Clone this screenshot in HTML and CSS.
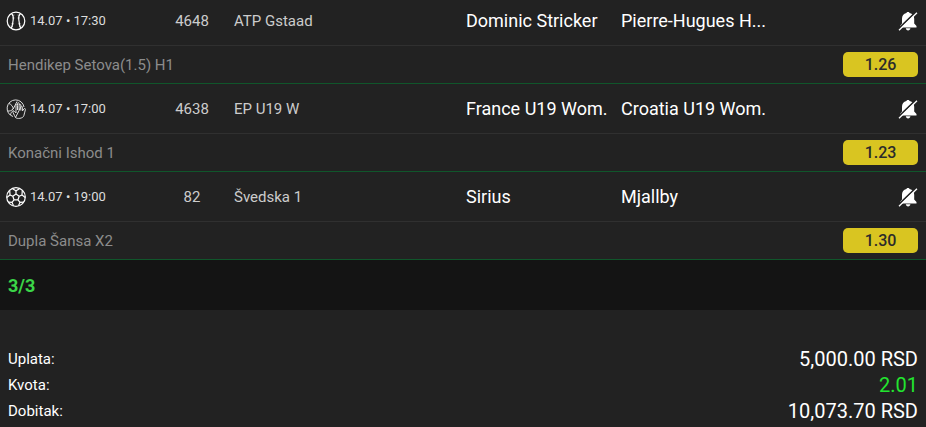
FILE: index.html
```html
<!DOCTYPE html>
<html lang="sr">
  <head>
    <meta charset="UTF-8" />
    <meta name="viewport" content="width=device-width, initial-scale=1.0" />
    <title>Tiket</title>
    <link rel="stylesheet" href="styles.css">
  </head>
  <body>
    <!-- Shared icons -->
    <svg class="sprite" aria-hidden="true">
      <symbol id="bell-off" viewBox="0 0 20 20">
        <path fill="#fff" d="M10 1c.9 0 1.500.5 1.600 1.100 3 .7 4.600 2.900 4.600 5.700v4.700l2.300 2.500v1.500H2V15l2-2.500V7.800c0-2.800 1.500-5 4.400-5.700C8.500 1.500 9.100 1 10 1zM7.800 17.300h4.600c-.2 1.300-1.100 2.100-2.300 2.100s-2.100-.8-2.300-2.100z" />
        <path stroke="#222" stroke-width="1.700" d="M0 18.300L18 .8" />
        <path stroke="#fff" stroke-width="1.300" d="M1 19.300L19 1.800" />
      </symbol>
    </svg>

    <!-- Matches -->
    <div class="match">
      <div class="match-head">
        <div class="time">
          <svg class="sport" viewBox="0 0 20 20" fill="none" stroke="#fff" stroke-width="1.200">
            <circle cx="10" cy="10" r="8.800" />
            <path d="M5.500 2.500C8.200 5.500 7.500 7.500 7 10s-.2 4.500-1.700 7.300M14.500 2.500C11.800 5.500 12.500 7.500 13 10s.2 4.500 1.700 7.300" />
            <path stroke-width=".5" d="M6 4.500l2.500-.5M6 7h2.500M5.500 12.500l2.500.5M4.500 15l2.500.7M14 4.500l-2.500-.5M14 7h-2.500M14.500 12.500l-2.500.5M15.500 15l-2.500.7" />
          </svg>
          <span>14.07 • 17:30</span>
        </div>
        <span class="code">4648</span>
        <span class="league">ATP Gstaad</span>
        <span class="team">Dominic Stricker</span>
        <span class="team">Pierre-Hugues H...</span>
        <button class="notify" aria-label="Obaveštenja"><svg><use href="#bell-off" /></svg></button>
      </div>
      <div class="match-bet">
        <span>Hendikep Setova(1.5) H1</span>
        <button class="odd">1.26</button>
      </div>
    </div>

    <div class="match">
      <div class="match-head">
        <div class="time">
          <svg class="sport" viewBox="0 0 20 20" fill="none" stroke="#ddd" stroke-width="1">
            <path d="M7 17.500A8.500 8.500 0 1 1 18 8" />
            <path d="M3 4.500c2.500 1 4 3 4.200 5.500M1.500 12c2.500.3 4-.5 5.700-2M7.200 10L11 2.500M4.500 16c.2-2 1.200-3.500 3-4.500" />
            <path d="M9.500 18.500C8.500 16 6.500 13.500 7 12.500s2 .2 3 1.500V6.500c0-1.200 1.400-1.200 1.500 0V11M11.500 6V4.500c0-1.200 1.500-1.200 1.600 0V11M13.200 6c.1-1.200 1.600-1.100 1.600 0v5.500M14.900 8c.2-1 1.500-.9 1.500.2V12l1.600-2.200c.6-.8 1.700-.2 1.400.8-.8 2.400-.9 4.400-1.600 6.200-.8 2.800-6.800 3.400-8.300 1.700z" />
          </svg>
          <span>14.07 • 17:00</span>
        </div>
        <span class="code">4638</span>
        <span class="league">EP U19 W</span>
        <span class="team">France U19 Wom.</span>
        <span class="team">Croatia U19 Wom.</span>
        <button class="notify" aria-label="Obaveštenja"><svg><use href="#bell-off" /></svg></button>
      </div>
      <div class="match-bet">
        <span>Konačni Ishod 1</span>
        <button class="odd">1.23</button>
      </div>
    </div>

    <div class="match">
      <div class="match-head">
        <div class="time">
          <svg class="sport" viewBox="0 0 20 20" fill="none" stroke="#fff" stroke-width="1.200">
            <circle cx="10" cy="10" r="9.300" />
            <path d="M10 7l3.200 2.200-1.200 3.600H8L6.800 9.200zM10 7V3.800M13.200 9.200L16 8M12 12.800l2 2.500M8 12.800l-2 2.500M6.800 9.200L4 8" />
            <path d="M6.500 1.700L10 3.800l3.500-2.100M16.300 3.300L16 8l3.200 2.500M17.500 15.200l-3.500.1-1.500 3.500M2.500 15.200l3.500.1 1.500 3.500M3.700 3.300L4 8 .8 10.500" />
          </svg>
          <span>14.07 • 19:00</span>
        </div>
        <span class="code">82</span>
        <span class="league">Švedska 1</span>
        <span class="team">Sirius</span>
        <span class="team">Mjallby</span>
        <button class="notify" aria-label="Obaveštenja"><svg><use href="#bell-off" /></svg></button>
      </div>
      <div class="match-bet">
        <span>Dupla Šansa X2</span>
        <button class="odd">1.30</button>
      </div>
    </div>

    <div class="count">3/3</div>

    <!-- Ticket totals -->
    <dl class="totals">
      <div class="total"><dt>Uplata:</dt><dd>5,000.00 RSD</dd></div>
      <div class="total"><dt>Kvota:</dt><dd class="quota">2.01</dd></div>
      <div class="total"><dt>Dobitak:</dt><dd>10,073.70 RSD</dd></div>
    </dl>
  </body>
</html>
```
FILE: styles.css
```css
body {
  margin: 0;
  background: #222;
  color: #fff;
  font-family: Roboto, sans-serif;
  font-size: 15px;
}
button {
  border: 0;
  padding: 0;
  background: none;
  font-family: inherit;
  cursor: pointer;
}
.sprite {
  display: none;
}
.match {
  border-bottom: 1px solid #10562b;
}
.match-head {
  display: grid;
  grid-template-columns: 144fr 84fr 232fr 155fr 155fr 142fr;
  align-items: center;
  padding: 14px 8px 13px 6px;
  line-height: 22px;
  border-bottom: 1px solid #303030;
  white-space: nowrap;
}
.sprite + .match .match-head {
  padding-top: 10px;
}
.time {
  display: flex;
  align-items: center;
  gap: 4px;
  color: #ddd;
  font-size: 13px;
}
.sport {
  width: 20px;
  height: 20px;
}
.code {
  text-align: center;
  color: #ccc;
}
.league {
  color: #ccc;
}
.team {
  font-size: 18px;
}
.notify {
  justify-self: end;
}
.notify svg {
  display: block;
  width: 20px;
  height: 20px;
}
.match-bet {
  display: flex;
  align-items: center;
  justify-content: space-between;
  padding: 6px 8px;
  color: #8c8c8c;
}
.odd {
  width: 75px;
  height: 25px;
  border-radius: 5px;
  background: #d9c521;
  color: #2b2b2b;
  font-size: 16px;
  font-weight: 500;
}
.count {
  padding: 15px 8px 13px;
  background: #141414;
  color: #3bd548;
  font-size: 18px;
  font-weight: bold;
  line-height: 22px;
}
.totals {
  margin: 0;
  padding: 36px 8px 0;
}
.total {
  display: flex;
  align-items: center;
  justify-content: space-between;
  line-height: 26px;
}
.total dd {
  margin: 0;
  font-size: 20px;
}
.total .quota {
  color: #22e52f;
}
```
